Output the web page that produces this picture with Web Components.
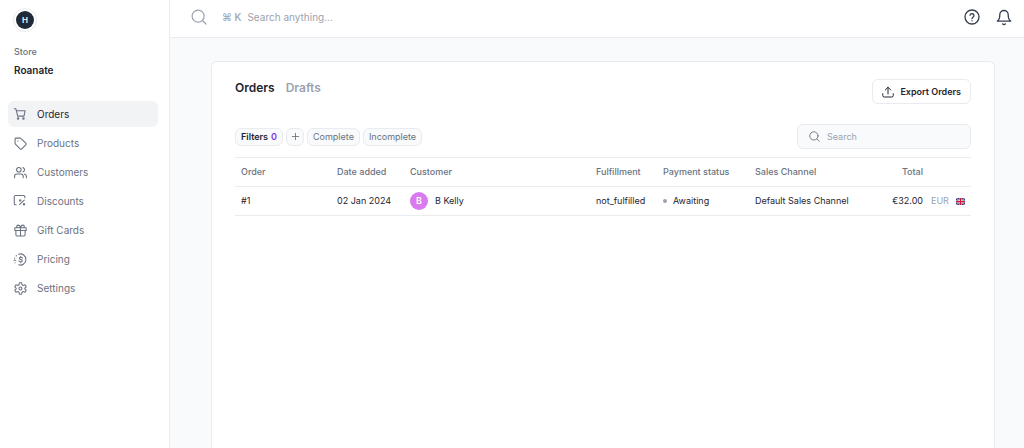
<!DOCTYPE html>
<html lang="en">
<head>
<meta charset="utf-8">
<meta name="viewport" content="width=device-width, initial-scale=1">
<title>Orders</title>
<style>
  html, body { margin: 0; min-height: 100%; }
  body {
    --grey-90: #1f2430; --grey-50: #6b7280; --grey-40: #9ca3af;
    --grey-20: #e9ebef; --grey-10: #f2f3f5; --grey-5: #f9fafb; --violet: #7c3aed;
    font: 400 9px/16px Inter, "Liberation Sans", sans-serif;
    color: var(--grey-90); background: #f9fafb;
  }
</style>
</head>
<body>
<app-shell>
  <side-bar slot="side" store="Roanate">
    <nav-item icon="cart" active>Orders</nav-item>
    <nav-item icon="tag">Products</nav-item>
    <nav-item icon="users">Customers</nav-item>
    <nav-item icon="discount">Discounts</nav-item>
    <nav-item icon="gift">Gift Cards</nav-item>
    <nav-item icon="dollar">Pricing</nav-item>
    <nav-item icon="gear">Settings</nav-item>
  </side-bar>
  <top-bar slot="top"></top-bar>
  <orders-card></orders-card>
</app-shell>

<script>
const ICONS = {
  search: '<circle cx="10.7" cy="10.7" r="9"/><path d="M17.200 17.200 22.500 22.500"/>',
  help: '<circle cx="12" cy="12" r="10.5"/><path d="M9 9.3a3 3 0 0 1 5.9.9c0 2-2.9 2.4-2.9 4.2"/><path d="M12 17.5v.1"/>',
  bell: '<path d="M18.3 8.6a6.3 6.3 0 0 0-12.6 0c0 7.200-3.700 9.600-3.700 9.600h20s-3.700-2.400-3.700-9.600"/><path d="M10 22.300a2.300 2.300 0 0 0 4 0"/>',
  upload: '<path d="M1.500 15.500v3.500a3 3 0 0 0 3 3h15a3 3 0 0 0 3-3v-3.500"/><path d="M12 16V2.500M6.500 8 12 2.500 17.500 8"/>',
  plus: '<path d="M12 1v22M1 12h22"/>',
  cart: '<path d="M.5 1.500h3l3.300 13.500h11.700L20.500 5H4.500"/><circle cx="7.500" cy="19.500" r="1.300"/><circle cx="17.500" cy="19.500" r="1.300"/>',
  tag: '<path d="M2 3.500v8.200c0 .6.200 1.100.6 1.500l8.700 8.600c.9.900 2.200.9 3.100 0l7.300-7.200c.9-.9.900-2.200 0-3.100l-8.600-8.700a2.200 2.200 0 0 0-1.500-.8H3.800C2.800 2 2 2.600 2 3.500z"/><path d="M7.200 7.200v.1"/>',
  users: '<circle cx="9" cy="7" r="4.200"/><path d="M1 21.500v-2.200a4.500 4.500 0 0 1 4.500-4.500h7a4.500 4.500 0 0 1 4.500 4.500v2.200M16.500 3a4.200 4.200 0 0 1 0 8M19.500 15a4.500 4.500 0 0 1 3.500 4.300v2.200"/>',
  discount: '<path d="M4 18H3a2.500 2.500 0 0 1-2.500-2.500v-12A2.500 2.500 0 0 1 3 1h14.500A2.500 2.500 0 0 1 20 3.500V5"/><path d="M10.500 17.500 19 9.500"/><circle cx="11.500" cy="10" r="1.200"/><circle cx="18.500" cy="17" r="1.200"/>',
  gift: '<path d="M3.500 12v8a2 2 0 0 0 2 2h13a2 2 0 0 0 2-2v-8M1.500 7h21v5h-21zM12 7v15M12 7H7.500a2.500 2.500 0 1 1 0-5C11 2 12 7 12 7zM12 7h4.500a2.500 2.500 0 1 0 0-5C13 2 12 7 12 7z"/>',
  dollar: '<path d="M8.500 2.200a10.300 10.300 0 1 1 0 19.600M4.300 4.900l-.3.300M1 9.500h.2M0 13.500h3M2 18h.2"/><path d="M15.500 9.300c-.4-1-1.500-1.500-2.800-1.500-3.500 0-3.900 3.300-.5 4 4.200.8 4 4.500.2 4.500-1.600 0-2.800-.6-3.200-1.800M12.500 6v1.500M12.500 16.500v1.500"/>',
  gear: '<circle cx="12" cy="12" r="2.800"/><path d="M10 1.500h4l.8 3.500 2.200 1.300 3.400-1.100 2.100 3.600-2.500 2.500v1.400l2.500 2.500-2.100 3.600-3.400-1.100-2.200 1.300-.8 3.500h-4l-.8-3.500L7 17.700l-3.400 1.100-2.100-3.600L4 12.700v-1.400L1.500 8.800l2.100-3.600L7 6.300 9.200 5z"/>'
};

class BaseElement extends HTMLElement {
  constructor() { super(); this.attachShadow({ mode: 'open' }); }
  connectedCallback() {
    this.shadowRoot.innerHTML = `<style>*{box-sizing:border-box}${this.css()}</style>${this.html()}`;
  }
}

customElements.define('ui-icon', class extends BaseElement {
  css() { return `:host{display:inline-flex;flex:none;width:12px;height:12px}
    svg{width:100%;height:100%;fill:none;stroke:currentColor;stroke-linecap:round;stroke-linejoin:round;overflow:visible}`; }
  html() { return `<svg viewBox="0 0 24 24" stroke-width="${this.getAttribute('weight') || 2}" aria-hidden="true">${ICONS[this.getAttribute('name')]}</svg>`; }
});

customElements.define('app-shell', class extends BaseElement {
  css() { return `:host{display:grid;grid-template-columns:170px minmax(0,1fr);height:100vh;overflow:hidden}
    .main{display:flex;flex-direction:column;min-width:0}
    main{flex:1;display:flex;flex-direction:column;padding:23px 29px 0 41px;min-height:0}
    ::slotted(orders-card){flex:1}`; }
  html() { return `<slot name="side"></slot><div class="main"><slot name="top"></slot><main><slot></slot></main></div>`; }
});

customElements.define('side-bar', class extends BaseElement {
  css() { return `:host{display:block;background:#fff;border-right:1px solid var(--grey-20);padding:8px 11px 0 8px}
    .logo{display:grid;place-items:center;width:24px;height:24px;margin-left:5px;padding:2px;border:1px solid var(--grey-20);border-radius:50%}
    .logo span{display:grid;place-items:center;width:18px;height:18px;border-radius:50%;background:#1f2937;color:#fff;font-size:8px;font-weight:600}
    .store{margin:12px 0 21px 6px}
    .store p{margin:0}
    .label{color:var(--grey-50);font-weight:500}
    .name{font-size:10px;font-weight:600;line-height:20px}
    nav{display:flex;flex-direction:column;gap:3px}`; }
  html() { return `<div class="logo"><span>H</span></div>
    <div class="store"><p class="label">Store</p><p class="name">${this.getAttribute('store')}</p></div>
    <nav><slot></slot></nav>`; }
});

customElements.define('nav-item', class extends BaseElement {
  css() { return `:host{display:block}
    a{display:flex;align-items:center;gap:10px;height:26px;padding:0 6px;border-radius:6px;color:var(--grey-50);font-size:10px;text-decoration:none}
    :host([active]) a{background:var(--grey-10);color:var(--grey-90)}
    ui-icon{width:13px;height:13px;color:var(--grey-50)}`; }
  html() { return `<a href="#"><ui-icon name="${this.getAttribute('icon')}"></ui-icon><slot></slot></a>`; }
});

customElements.define('top-bar', class extends BaseElement {
  css() { return `:host{display:flex;align-items:center;justify-content:space-between;height:38px;flex:none;box-sizing:border-box;
      padding:0 12px 4px 21px;background:#fff;border-bottom:1px solid var(--grey-20)}
    button{display:flex;align-items:center;padding:0;border:0;background:none;font:inherit;font-size:10px;color:var(--grey-40)}
    kbd{font:inherit;font-weight:500;margin:0 6px 0 15px}
    .search ui-icon{width:16px;height:16px}
    .actions{display:flex;gap:16px;color:#374151}
    .actions button{color:inherit}
    .actions ui-icon{width:16px;height:16px}`; }
  html() { return `<button class="search"><ui-icon name="search" weight="1.8"></ui-icon><kbd>⌘ K</kbd><span>Search anything...</span></button>
    <div class="actions"><button aria-label="Help"><ui-icon name="help"></ui-icon></button><button aria-label="Notifications"><ui-icon name="bell"></ui-icon></button></div>`; }
});

customElements.define('filter-chip', class extends BaseElement {
  css() { return `:host{display:block}
    button{display:flex;align-items:center;gap:3px;height:18px;padding:0 5px;border:1px solid var(--grey-20);border-radius:6px;background:var(--grey-5);color:var(--grey-50);font:inherit}
    :host([strong]) button{color:var(--grey-90);font-weight:600}
    ::slotted(b){color:var(--violet);font-weight:600}
    ::slotted(ui-icon){width:7px;height:7px}
    :host([square]) button{width:18px;padding:0;justify-content:center}`; }
  html() { return `<button><slot></slot></button>`; }
});

customElements.define('user-avatar', class extends BaseElement {
  css() { return `:host{display:flex;align-items:center;gap:7px}
    .dot{display:grid;place-items:center;width:18px;height:18px;border-radius:50%;background:#d97af0;color:#fff;font-weight:600}`; }
  html() { return `<span class="dot">${this.textContent.trim()[0]}</span><slot></slot>`; }
});

customElements.define('flag-gb', class extends BaseElement {
  css() { return `:host{display:block;width:9px;height:7px;border-radius:1px;overflow:hidden}svg{display:block;width:100%;height:100%}`; }
  html() { return `<svg viewBox="0 0 36 28" preserveAspectRatio="none" role="img" aria-label="GB"><path fill="#2b3f87" d="M0 0h36v28H0z"/><path stroke="#fff" stroke-width="4" d="m0 0 36 28M36 0 0 28"/><path stroke="#c8203a" stroke-width="2" d="m0 0 36 28M36 0 0 28"/><path stroke="#fff" stroke-width="8" d="M18 0v28M0 14h36"/><path stroke="#cf1b35" stroke-width="5" d="M18 0v28M0 14h36"/></svg>`; }
});

customElements.define('orders-table', class extends BaseElement {
  css() { return `:host{display:block}
    table{width:100%;border-collapse:collapse;table-layout:fixed}
    th,td{height:29px;padding:0;text-align:left;white-space:nowrap;border-top:1px solid var(--grey-20);border-bottom:1px solid var(--grey-20)}
    th{color:var(--grey-50);font-weight:500}
    tr>:first-child{padding-left:6px}
    tr>.num{text-align:right}
    .cur{padding-left:8px;color:var(--grey-40)}
    .order{width:102px}.date{width:73px}.ful{width:67px}.pay{width:92px}.chan{width:108px}.total{width:60px}.curc{width:33px}.flag{width:15px}
    .status{display:flex;align-items:center;gap:6px}
    .status i{width:4px;height:4px;border-radius:50%;background:var(--grey-40)}`; }
  html() { return `<table>
    <colgroup><col class="order"><col class="date"><col><col class="ful"><col class="pay"><col class="chan"><col class="total"><col class="curc"><col class="flag"></colgroup>
    <thead><tr><th>Order</th><th>Date added</th><th>Customer</th><th>Fulfillment</th><th>Payment status</th><th>Sales Channel</th><th class="num">Total</th><th></th><th></th></tr></thead>
    <tbody><tr><td>#1</td><td>02 Jan 2024</td><td><user-avatar>B Kelly</user-avatar></td><td>not_fulfilled</td><td><div class="status"><i></i><span>Awaiting</span></div></td><td>Default Sales Channel</td><td class="num">€32.00</td><td class="cur">EUR</td><td><flag-gb></flag-gb></td></tr></tbody>
    </table>`; }
});

customElements.define('orders-card', class extends BaseElement {
  css() { return `:host{display:block;box-sizing:border-box;background:#fff;border:1px solid var(--grey-20);border-bottom:0;border-radius:6px 6px 0 0;padding:17px 23px 0}
    header,.tools{display:flex;justify-content:space-between}
    .tabs{display:flex;gap:11px}
    .tabs button{height:18px;padding:0;border:0;background:none;font:600 12px/18px Inter,sans-serif;color:var(--grey-40)}
    .tabs [aria-selected=true]{color:var(--grey-90)}
    .export{display:flex;align-items:center;gap:6px;height:25px;padding:0 9px;border:1px solid var(--grey-20);border-radius:6px;background:#fff;color:var(--grey-90);font:inherit;font-weight:600}
    .tools{align-items:center;margin:20px 0 8px}
    .chips{display:flex;gap:3px}
    .search{display:flex;align-items:center;gap:7px;width:174px;height:25px;padding:0 11px;border:1px solid var(--grey-20);border-radius:6px;background:var(--grey-5);color:var(--grey-50)}
    .search ui-icon{width:11px;height:11px}
    input{flex:1;min-width:0;padding:0;border:0;outline:0;background:none;font:inherit;color:var(--grey-90)}
    input::placeholder{color:var(--grey-40);opacity:1}`; }
  html() { return `<header>
      <div class="tabs" role="tablist"><button role="tab" aria-selected="true">Orders</button><button role="tab" aria-selected="false">Drafts</button></div>
      <button class="export"><ui-icon name="upload"></ui-icon>Export Orders</button>
    </header>
    <div class="tools">
      <div class="chips"><filter-chip strong>Filters <b>0</b></filter-chip><filter-chip square><ui-icon name="plus" weight="3"></ui-icon></filter-chip><filter-chip>Complete</filter-chip><filter-chip>Incomplete</filter-chip></div>
      <label class="search"><ui-icon name="search"></ui-icon><input type="search" aria-label="Search" placeholder="Search"></label>
    </div>
    <orders-table></orders-table>`; }
});
</script>
</body>
</html>
